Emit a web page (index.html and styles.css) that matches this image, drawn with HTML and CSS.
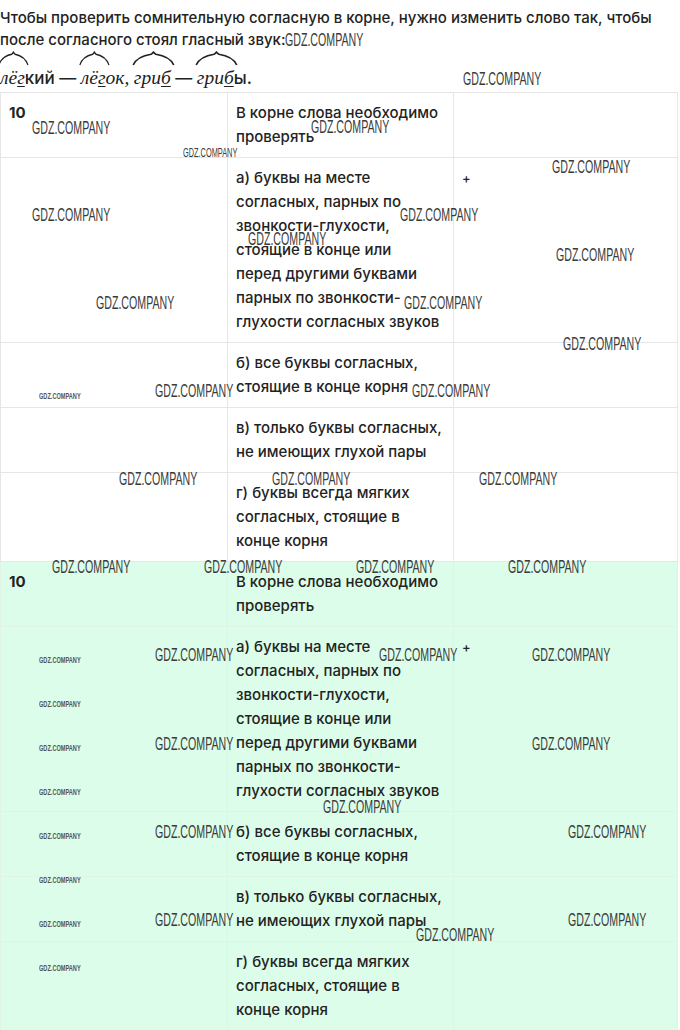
FILE: index.html
```html
<!DOCTYPE html>
<html lang="ru">
<head>
<meta charset="utf-8">
<title>GDZ</title>
<link rel="stylesheet" href="styles.css">
</head>
<body>
<div class="page">
  <p class="intro">Чтобы проверить сомнительную согласную в корне, нужно изменить слово так, чтобы после согласного стоял гласный звук:<span class="wm-inline">GDZ.COMPANY</span></p>
  <p class="example"><span class="it"><span class="root">лё<u>г</u><svg class="arc" viewBox="0 0 36 14" preserveAspectRatio="none"><path d="M1 13 C4 6 10 4 16 3 C17 2.5 17.5 1.5 18 1 C18.5 1.5 19 2.5 20 3 C26 4 32 6 35 13"/></svg></span></span>кий — <span class="it"><span class="root">лё<u>г</u><svg class="arc" viewBox="0 0 36 14" preserveAspectRatio="none"><path d="M1 13 C4 6 10 4 16 3 C17 2.5 17.5 1.5 18 1 C18.5 1.5 19 2.5 20 3 C26 4 32 6 35 13"/></svg></span>ок,</span> <span class="it"><span class="root">гри<u>б</u><svg class="arc" viewBox="0 0 36 14" preserveAspectRatio="none"><path d="M1 13 C4 6 10 4 16 3 C17 2.5 17.5 1.5 18 1 C18.5 1.5 19 2.5 20 3 C26 4 32 6 35 13"/></svg></span></span> — <span class="it"><span class="root">гри<u>б</u><svg class="arc" viewBox="0 0 36 14" preserveAspectRatio="none"><path d="M1 13 C4 6 10 4 16 3 C17 2.5 17.5 1.5 18 1 C18.5 1.5 19 2.5 20 3 C26 4 32 6 35 13"/></svg></span></span>ы.</p>
  <table class="tbl">
    <colgroup><col class="c1"><col class="c2"><col class="c3"></colgroup>
    <tbody>
      <tr><td class="num">10</td><td>В корне слова необходимо проверять</td><td></td></tr>
      <tr><td></td><td>а) буквы на месте согласных, парных по звонкости-глухости, стоящие в конце или<br>перед другими буквами<br>парных по звонкости-<br>глухости согласных звуков</td><td class="mark">+</td></tr>
      <tr><td></td><td>б) все буквы согласных, стоящие в конце корня</td><td></td></tr>
      <tr><td></td><td>в) только буквы согласных, не имеющих глухой пары</td><td></td></tr>
      <tr><td></td><td>г) буквы всегда мягких согласных, стоящие в конце корня</td><td></td></tr>
    </tbody>
    <tbody class="green">
      <tr><td class="num">10</td><td>В корне слова необходимо проверять</td><td></td></tr>
      <tr><td></td><td>а) буквы на месте согласных, парных по звонкости-глухости, стоящие в конце или<br>перед другими буквами<br>парных по звонкости-<br>глухости согласных звуков</td><td class="mark">+</td></tr>
      <tr><td></td><td>б) все буквы согласных, стоящие в конце корня</td><td></td></tr>
      <tr><td></td><td>в) только буквы согласных, не имеющих глухой пары</td><td></td></tr>
      <tr><td></td><td>г) буквы всегда мягких согласных, стоящие в конце корня</td><td></td></tr>
    </tbody>
  </table>

  <div class="wm-layer" aria-hidden="true">
    <span class="wm" style="left:463px;top:70px">GDZ.COMPANY</span>
    <span class="wm" style="left:32px;top:119px">GDZ.COMPANY</span>
    <span class="wm" style="left:311px;top:118px">GDZ.COMPANY</span>
    <span class="wm wm-m" style="left:183px;top:147px">GDZ.COMPANY</span>
    <span class="wm" style="left:552px;top:158px">GDZ.COMPANY</span>
    <span class="wm" style="left:32px;top:206px">GDZ.COMPANY</span>
    <span class="wm" style="left:400px;top:206px">GDZ.COMPANY</span>
    <span class="wm" style="left:248px;top:230px">GDZ.COMPANY</span>
    <span class="wm" style="left:556px;top:246px">GDZ.COMPANY</span>
    <span class="wm" style="left:96px;top:294px">GDZ.COMPANY</span>
    <span class="wm" style="left:404px;top:294px">GDZ.COMPANY</span>
    <span class="wm" style="left:563px;top:335px">GDZ.COMPANY</span>
    <span class="wm wm-s" style="left:39px;top:391px">GDZ.COMPANY</span>
    <span class="wm" style="left:155px;top:382px">GDZ.COMPANY</span>
    <span class="wm" style="left:412px;top:382px">GDZ.COMPANY</span>
    <span class="wm" style="left:119px;top:470px">GDZ.COMPANY</span>
    <span class="wm" style="left:272px;top:470px">GDZ.COMPANY</span>
    <span class="wm" style="left:479px;top:470px">GDZ.COMPANY</span>
    <span class="wm" style="left:52px;top:558px">GDZ.COMPANY</span>
    <span class="wm" style="left:204px;top:558px">GDZ.COMPANY</span>
    <span class="wm" style="left:356px;top:558px">GDZ.COMPANY</span>
    <span class="wm" style="left:508px;top:558px">GDZ.COMPANY</span>
    <span class="wm wm-s" style="left:39px;top:655px">GDZ.COMPANY</span>
    <span class="wm" style="left:155px;top:646px">GDZ.COMPANY</span>
    <span class="wm" style="left:379px;top:646px">GDZ.COMPANY</span>
    <span class="wm" style="left:532px;top:646px">GDZ.COMPANY</span>
    <span class="wm wm-s" style="left:39px;top:699px">GDZ.COMPANY</span>
    <span class="wm wm-s" style="left:39px;top:743px">GDZ.COMPANY</span>
    <span class="wm" style="left:155px;top:735px">GDZ.COMPANY</span>
    <span class="wm" style="left:532px;top:735px">GDZ.COMPANY</span>
    <span class="wm wm-s" style="left:39px;top:787px">GDZ.COMPANY</span>
    <span class="wm" style="left:323px;top:798px">GDZ.COMPANY</span>
    <span class="wm wm-s" style="left:39px;top:831px">GDZ.COMPANY</span>
    <span class="wm" style="left:155px;top:823px">GDZ.COMPANY</span>
    <span class="wm" style="left:568px;top:823px">GDZ.COMPANY</span>
    <span class="wm wm-s" style="left:39px;top:875px">GDZ.COMPANY</span>
    <span class="wm wm-s" style="left:39px;top:919px">GDZ.COMPANY</span>
    <span class="wm" style="left:155px;top:911px">GDZ.COMPANY</span>
    <span class="wm" style="left:568px;top:911px">GDZ.COMPANY</span>
    <span class="wm" style="left:416px;top:926px">GDZ.COMPANY</span>
    <span class="wm wm-s" style="left:39px;top:963px">GDZ.COMPANY</span>
  </div>
</div>
</body>
</html>
```
FILE: styles.css
```css
html, body {
  margin: 0;
  padding: 0;
  background: #ffffff;
}

.page {
  position: relative;
  width: 680px;
  min-height: 1030px;
  overflow: hidden;
  font-family: "Inter", "Open Sans", sans-serif;
  font-size: 15px;
  font-weight: 500;
  color: #232323;
}

.intro {
  margin: 0;
  padding-top: 7px;
  line-height: 22px;
}

.example {
  margin: 0;
  padding-top: 14px;
  height: 27px;
  line-height: 26px;
  white-space: nowrap;
  font-size: 17px;
}

.it {
  font-family: "Liberation Serif", "DejaVu Serif", serif;
  font-style: italic;
  font-weight: 400;
  font-size: 19.5px;
}

.it u {
  text-decoration-thickness: 1px;
  text-underline-offset: 2px;
}

.root {
  position: relative;
}

.arc {
  position: absolute;
  left: -2px;
  top: -16px;
  width: calc(100% + 6px);
  height: 15px;
  fill: none;
  stroke: #222;
  stroke-width: 1.4;
}

.tbl {
  border-collapse: collapse;
  table-layout: fixed;
  width: 677px;
  margin: 0;
}

.c1 { width: 227px; }
.c2 { width: 226px; }
.c3 { width: 224px; }

.tbl td {
  border: 1px solid #e6e6e6;
  padding: 8px 10px 8px 8px;
  vertical-align: top;
  line-height: 24px;
}

.tbl .num {
  font-weight: 700;
}

.tbl .mark {
  font-size: 13px;
  padding-left: 8px;
}

.green td {
  background: #dcfde9;
  border-color: #e2f2e7;
}

.wm-layer {
  position: absolute;
  left: 0;
  top: 0;
  width: 680px;
  height: 1030px;
  pointer-events: none;
}

.wm {
  position: absolute;
  font-family: "Liberation Sans", sans-serif;
  font-weight: 400;
  font-size: 18px;
  line-height: 18px;
  color: #3a3a3a;
  white-space: nowrap;
  transform: scaleX(0.59);
  transform-origin: 0 50%;
}

.wm-m {
  font-size: 12.5px;
  line-height: 12px;
}

.wm-s {
  font-size: 9.5px;
  line-height: 10px;
  font-weight: 700;
  color: #555;
}

.wm-inline {
  display: inline-block;
  font-family: "Liberation Sans", sans-serif;
  font-weight: 400;
  font-size: 18px;
  line-height: 18px;
  color: #3a3a3a;
  transform: scaleX(0.59);
  transform-origin: 0 50%;
  vertical-align: -1px;
}
```
